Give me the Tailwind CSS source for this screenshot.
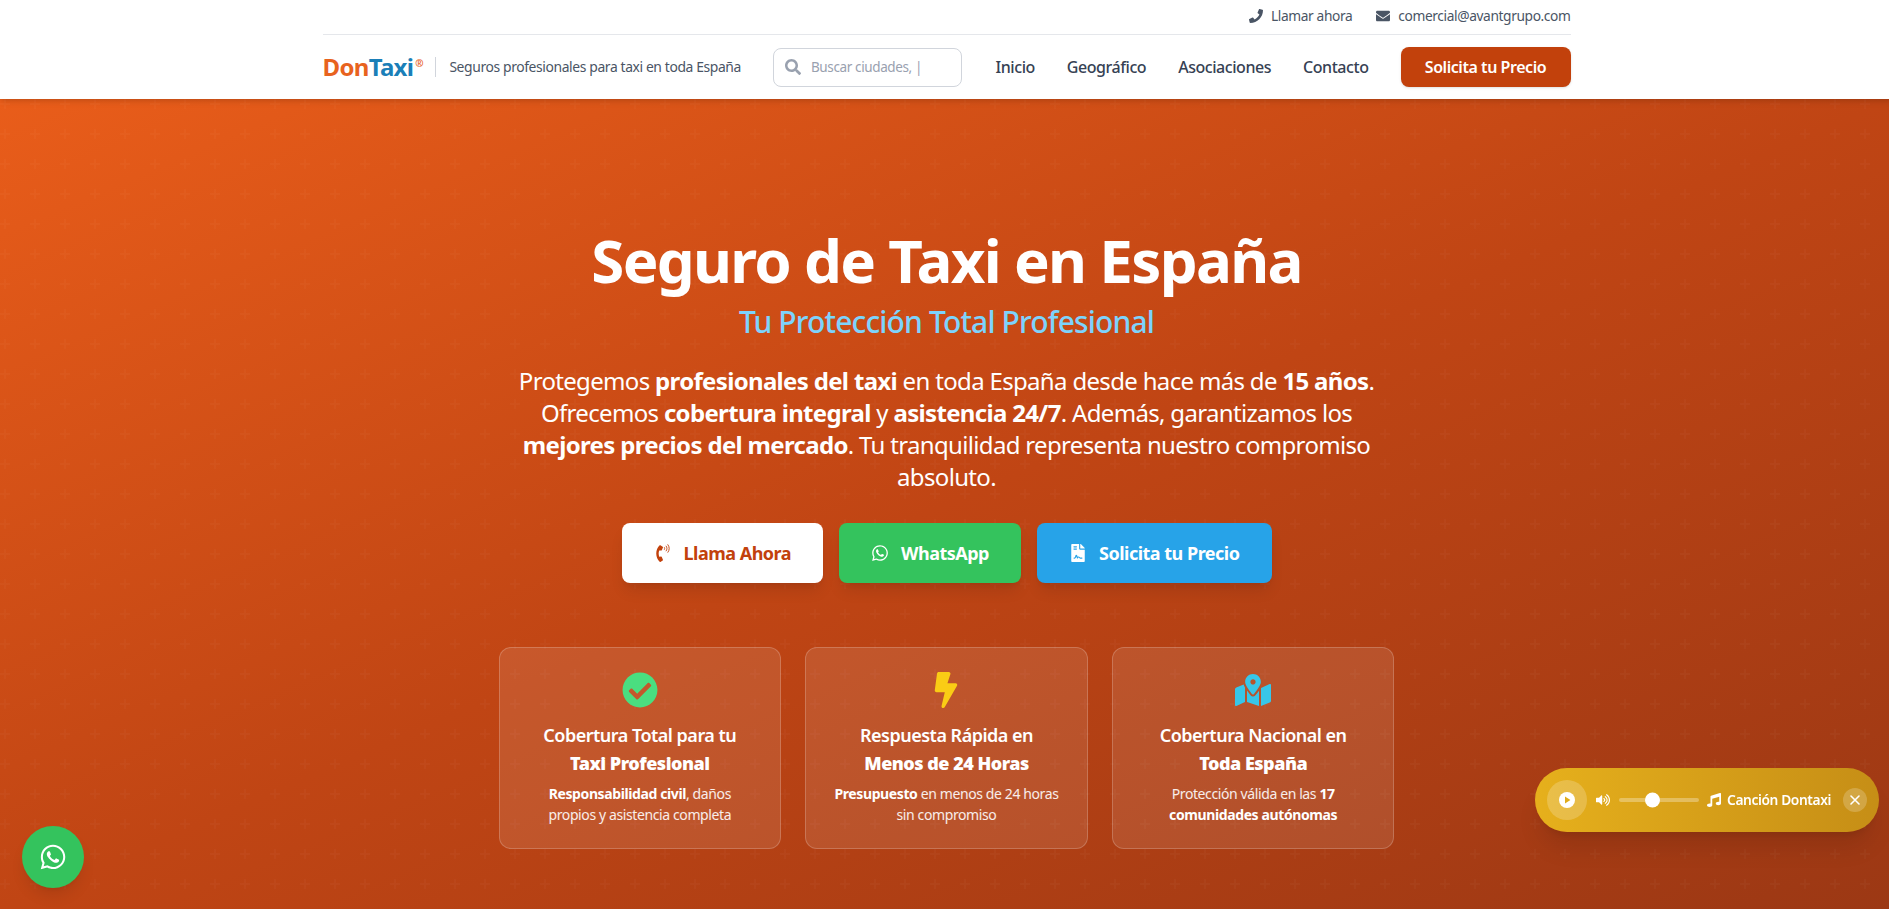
<!DOCTYPE html>
<html lang="es">
<head>
<meta charset="utf-8">
<title>DonTaxi</title>
<script src="https://cdn.jsdelivr.net/npm/@tailwindcss/browser@4"></script>
</head>
<body class="h-[909px] overflow-hidden bg-white font-['Noto_Sans',sans-serif] [&_*]:tracking-[-0.028em]">
<div class="relative w-[1893px] h-[909px] overflow-hidden">
  <header class="relative z-10 h-[99px] bg-white shadow-md">
    <div class="mx-auto max-w-7xl px-4">
      <div class="flex h-[35px] items-center justify-end gap-6 border-b border-gray-200 pb-0.5 text-[13.75px] text-gray-600">
        <span class="flex items-center gap-2">
          <svg class="h-3.5 w-3.5 fill-gray-600" viewBox="0 0 512 512"><path d="M493.4 24.6l-104-24c-11.3-2.6-22.9 3.3-27.5 13.9l-48 112c-4.2 9.8-1.4 21.3 6.9 28l60.6 49.6c-36 76.7-98.9 140.5-177.2 177.2l-49.6-60.6c-6.8-8.3-18.2-11.1-28-6.9l-112 48C3.9 366.5-2 378.1.6 389.4l24 104C27.1 504.2 36.7 512 48 512c256.1 0 464-207.5 464-464 0-11.2-7.7-20.9-18.6-23.4z"/></svg>
          Llamar ahora
        </span>
        <span class="flex items-center gap-2">
          <svg class="h-3.5 w-3.5 fill-gray-600" viewBox="0 0 512 512"><path d="M502.3 190.8c3.9-3.1 9.7-.2 9.7 4.7V400c0 26.5-21.5 48-48 48H48c-26.5 0-48-21.5-48-48V195.6c0-5 5.7-7.8 9.7-4.7 22.4 17.4 52.1 39.5 154.1 113.6 21.1 15.4 56.7 47.8 92.2 47.6 35.7.3 72-32.8 92.3-47.6 102-74.1 131.6-96.3 154-113.7zM256 320c23.2.4 56.6-29.2 73.4-41.4 132.7-96.3 142.8-104.7 173.4-128.7 5.8-4.5 9.2-11.5 9.2-18.9v-19c0-26.5-21.5-48-48-48H48C21.5 64 0 85.5 0 112v19c0 7.4 3.4 14.3 9.2 18.9 30.6 23.9 40.7 32.4 173.4 128.7 16.8 12.2 50.2 41.8 73.4 41.4z"/></svg>
          comercial@avantgrupo.com
        </span>
      </div>
      <div class="flex h-[64px] items-center">
        <div class="flex items-center">
          <span class="text-[24px] leading-none font-bold"><span class="text-[#e8631e]">Don</span><span class="text-[#1b7fb8]">Taxi</span></span>
          <span class="mb-2 ml-0.5 text-[10px] leading-none font-bold text-[#e8631e]">®</span>
          <span class="ml-3 h-5 w-px bg-gray-300"></span>
          <span class="ml-[13px] text-[13.9px] text-gray-600">Seguros profesionales para taxi en toda España</span>
        </div>
        <div class="ml-[32px] flex h-[39px] w-[189px] items-center gap-2.5 rounded-lg border border-gray-300 px-[11px]">
          <svg class="h-4 w-4 shrink-0 fill-gray-400" viewBox="0 0 512 512"><path d="M505 442.7L405.3 343c-4.5-4.5-10.6-7-17-7H372c27.6-35.3 44-79.7 44-128C416 93.1 322.9 0 208 0S0 93.1 0 208s93.1 208 208 208c48.3 0 92.7-16.4 128-44v16.3c0 6.4 2.5 12.5 7 17l99.7 99.7c9.4 9.4 24.6 9.4 33.9 0l28.3-28.3c9.4-9.4 9.4-24.6.1-34zM208 336c-70.7 0-128-57.2-128-128 0-70.7 57.2-128 128-128 70.7 0 128 57.2 128 128 0 70.7-57.2 128-128 128z"/></svg>
          <span class="text-[13.5px] whitespace-nowrap text-gray-400">Buscar ciudades, |</span>
        </div>
        <nav class="ml-auto flex items-center gap-8 text-[16px] font-medium text-gray-700">
          <span>Inicio</span><span>Geográfico</span><span>Asociaciones</span><span>Contacto</span>
          <span class="flex h-10 w-[170px] items-center justify-center rounded-lg bg-[#c2410c] text-[16px] font-semibold text-white shadow-sm">Solicita tu Precio</span>
        </nav>
      </div>
    </div>
  </header>

  <main class="relative h-[810px] bg-linear-to-br from-[#e95d1a] via-[#c04514] to-[#9c3814]">
    <svg class="absolute inset-0 h-full w-full" aria-hidden="true"><defs><pattern id="plus" width="60" height="60" patternUnits="userSpaceOnUse"><path fill="#fff" fill-opacity="0.025" d="M36 34v-4h-2v4h-4v2h4v4h2v-4h4v-2h-4zm0-30V0h-2v4h-4v2h4v4h2V6h4V4h-4zM6 34v-4H4v4H0v2h4v4h2v-4h4v-2H6zM6 4V0H4v4H0v2h4v4h2V6h4V4H6z"/></pattern></defs><rect width="100%" height="100%" fill="url(#plus)"/></svg>
    <div class="relative mx-auto flex max-w-4xl flex-col items-center pt-[131px] text-center text-white">
      <h1 class="text-[60px] leading-[60px] font-bold whitespace-nowrap">Seguro de Taxi en España</h1>
      <h2 class="mt-[14px] text-[30px] leading-9 font-medium text-[#7dd3fc]">Tu Protección Total Profesional</h2>
      <p class="mt-[25px] w-[870px] text-[24px] leading-8">Protegemos <strong class="font-bold">profesionales del taxi</strong> en toda España desde hace más de <strong class="font-bold">15 años</strong>. Ofrecemos <strong class="font-bold">cobertura integral</strong> y <strong class="font-bold">asistencia 24/7</strong>. Además, garantizamos los <strong class="font-bold">mejores precios del mercado</strong>. Tu tranquilidad representa nuestro compromiso absoluto.</p>
      <div class="mt-[30px] flex gap-4 text-[18px] font-bold">
        <span class="flex h-[60px] items-center gap-3 rounded-lg bg-white px-8 text-[#c2410c] shadow-lg">
          <svg class="h-[18px] w-[18px] fill-[#c2410c]" viewBox="0 0 384 512"><path d="M97.333 506.966c-129.874-129.874-129.681-340.252 0-469.933 5.698-5.698 14.527-6.632 21.263-2.422l64.817 40.513a17.187 17.187 0 0 1 6.849 20.958l-32.408 81.021a17.188 17.188 0 0 1-17.669 10.719l-55.81-5.58c-21.051 58.261-20.612 122.471 0 179.515l55.811-5.581a17.188 17.188 0 0 1 17.669 10.719l32.408 81.022a17.188 17.188 0 0 1-6.849 20.958l-64.817 40.513a17.19 17.19 0 0 1-21.264-2.422z"/><path fill="none" stroke="#c2410c" stroke-width="26" stroke-linecap="round" d="M232 100c12 18 12 38 0 56M282 60c32 42 32 94 0 136M332 20c50 66 50 150 0 216"/></svg>
          Llama Ahora
        </span>
        <span class="flex h-[60px] items-center gap-3 rounded-lg bg-[#34c35d] px-8 shadow-lg">
          <svg class="h-[18px] w-[18px] fill-white" viewBox="0 0 448 512"><path d="M380.9 97.1C339 55.1 283.2 32 223.9 32c-122.4 0-222 99.6-222 222 0 39.1 10.2 77.3 29.6 111L0 480l117.7-30.9c32.4 17.7 68.9 27 106.1 27h.1c122.3 0 224.1-99.6 224.1-222 0-59.3-25.2-115-67.1-157zm-157 341.6c-33.2 0-65.7-8.9-94-25.7l-6.7-4-69.8 18.3L72 359.2l-4.4-7c-18.5-29.4-28.2-63.3-28.2-98.2 0-101.7 82.8-184.5 184.6-184.5 49.3 0 95.6 19.2 130.4 54.1 34.8 34.9 56.2 81.2 56.1 130.5 0 101.8-84.9 184.6-186.6 184.6zm101.2-138.2c-5.5-2.8-32.8-16.2-37.9-18-5.1-1.9-8.8-2.8-12.5 2.8-3.7 5.6-14.3 18-17.6 21.8-3.2 3.7-6.5 4.2-12 1.4-32.6-16.3-54-29.1-75.5-66-5.7-9.8 5.7-9.1 16.3-30.3 1.8-3.7.9-6.9-.5-9.7-1.4-2.8-12.5-30.1-17.1-41.2-4.5-10.8-9.1-9.3-12.5-9.5-3.2-.2-6.9-.2-10.6-.2-3.7 0-9.7 1.4-14.8 6.9-5.1 5.6-19.4 19-19.4 46.3 0 27.3 19.9 53.7 22.6 57.4 2.8 3.7 39.1 59.7 94.8 83.8 35.2 15.2 49 16.5 66.6 13.9 10.7-1.6 32.8-13.4 37.4-26.4 4.6-13 4.6-24.1 3.2-26.4-1.3-2.5-5-3.9-10.5-6.6z"/></svg>
          WhatsApp
        </span>
        <span class="flex h-[60px] items-center gap-3 rounded-lg bg-[#27a3e8] px-8 shadow-lg">
          <svg class="h-[18px] w-[18px] fill-white" viewBox="0 0 384 512"><path d="M224 136V0H24C10.7 0 0 10.7 0 24v464c0 13.3 10.7 24 24 24h336c13.3 0 24-10.7 24-24V160H248c-13.2 0-24-10.8-24-24zM64 72c0-4.42 3.58-8 8-8h80c4.42 0 8 3.58 8 8v16c0 4.42-3.58 8-8 8H72c-4.42 0-8-3.58-8-8V72zm0 64c0-4.42 3.58-8 8-8h80c4.42 0 8 3.58 8 8v16c0 4.42-3.58 8-8 8H72c-4.42 0-8-3.58-8-8v-16zm192.81 248H304c8.84 0 16 7.16 16 16s-7.16 16-16 16h-47.19c-16.45 0-31.27-9.14-38.64-23.86-2.95-5.92-8.09-6.52-10.17-6.52s-7.22.59-10.02 6.19l-7.67 15.34a15.986 15.986 0 0 1-14.31 8.84c-.38 0-.75-.02-1.14-.05-6.45-.45-12-4.75-14.03-10.89L144 354.59l-10.61 31.88c-5.89 17.66-22.38 29.53-41 29.53H80c-8.84 0-16-7.16-16-16s7.16-16 16-16h12.39c4.83 0 9.11-3.08 10.64-7.66l18.19-54.64c3.3-9.81 12.44-16.41 22.78-16.41s19.48 6.59 22.77 16.41l13.88 41.64c19.77-16.19 54.05-9.7 66 14.16 2.02 4.06 5.96 6.5 10.16 6.5zM377 105L279.1 7c-4.5-4.5-10.6-7-17-7H256v128h128v-6.1c0-6.3-2.5-12.4-7-16.9z"/></svg>
          Solicita tu Precio
        </span>
      </div>
      <div class="mt-16 grid w-full grid-cols-3 gap-6">
        <div class="flex h-[202px] flex-col items-center rounded-xl border border-white/20 bg-white/10 px-6 pt-6">
          <svg class="h-9 w-9 shrink-0 fill-[#4ade80]" viewBox="0 0 512 512"><path d="M504 256c0 136.967-111.033 248-248 248S8 392.967 8 256 119.033 8 256 8s248 111.033 248 248zM227.314 387.314l184-184c6.248-6.248 6.248-16.379 0-22.627l-22.627-22.627c-6.248-6.249-16.379-6.249-22.628 0L216 308.118l-70.059-70.059c-6.248-6.248-16.379-6.248-22.628 0l-22.627 22.627c-6.248 6.248-6.248 16.379 0 22.627l104 104c6.249 6.25 16.379 6.25 22.628.001z"/></svg>
          <h3 class="mt-[13px] text-[18px] leading-7 font-semibold">Cobertura Total para tu <strong class="block font-black">Taxi Profesional</strong></h3>
          <p class="mt-1.5 text-[14px] leading-[21px] text-white/90"><strong class="font-bold text-white">Responsabilidad civil</strong>, daños<br>propios y asistencia completa</p>
        </div>
        <div class="flex h-[202px] flex-col items-center rounded-xl border border-white/20 bg-white/10 px-6 pt-6">
          <svg class="h-9 w-9 shrink-0 fill-[#facc15]" viewBox="0 0 320 512"><path d="M296 160H180.6l42.6-129.8C227.2 15 215.7 0 200 0H56C44 0 33.8 8.9 32.2 20.8l-32 240C-1.7 275.2 9.5 288 24 288h118.7L96.6 482.5c-3.6 15.2 8 29.5 23.3 29.5 8.4 0 16.4-4.4 20.8-12l176-304c9.3-15.9-2.2-36-20.7-36z"/></svg>
          <h3 class="mt-[13px] text-[18px] leading-7 font-semibold">Respuesta Rápida en <strong class="block font-black">Menos de 24 Horas</strong></h3>
          <p class="mt-1.5 text-[14px] leading-[21px] text-white/90"><strong class="font-bold text-white">Presupuesto</strong> en menos de 24 horas<br>sin compromiso</p>
        </div>
        <div class="flex h-[202px] flex-col items-center rounded-xl border border-white/20 bg-white/10 px-6 pt-6">
          <svg class="h-9 w-9 shrink-0 fill-[#38c6e8]" viewBox="0 0 576 512"><path d="M288 0c-69.59 0-126 56.41-126 126 0 56.26 82.35 158.8 113.9 196.02 6.39 7.54 17.82 7.54 24.2 0C331.65 284.8 414 182.26 414 126 414 56.41 357.59 0 288 0zm0 168c-23.2 0-42-18.8-42-42s18.8-42 42-42 42 18.8 42 42-18.8 42-42 42zM20.12 215.95A32.006 32.006 0 0 0 0 245.66v250.32c0 11.32 11.43 19.06 21.94 14.86L160 448V214.92c-8.84-15.98-16.07-31.54-21.25-46.42L20.12 215.95zM288 359.67c-14.07 0-27.38-6.18-36.51-16.96-19.66-23.2-40.57-49.62-59.49-76.72V448l192 64V266c-18.92 27.09-39.82 53.52-59.49 76.72-9.13 10.77-22.44 16.95-36.51 16.95zm266.06-198.51L416 224v288l139.88-55.95A31.996 31.996 0 0 0 576 426.34V176.02c0-11.32-11.43-19.06-21.94-14.86z"/></svg>
          <h3 class="mt-[13px] text-[18px] leading-7 font-semibold">Cobertura Nacional en <strong class="block font-black">Toda España</strong></h3>
          <p class="mt-1.5 text-[14px] leading-[21px] text-white/90">Protección válida en las <strong class="font-bold text-white">17<br>comunidades autónomas</strong></p>
        </div>
      </div>
    </div>
  </main>
</div>

<div class="fixed bottom-[21px] left-[22px] flex h-[62px] w-[62px] items-center justify-center rounded-full bg-[#34c35d] shadow-lg">
  <svg class="h-7 w-7 fill-white" viewBox="0 0 448 512"><path d="M380.9 97.1C339 55.1 283.2 32 223.9 32c-122.4 0-222 99.6-222 222 0 39.1 10.2 77.3 29.6 111L0 480l117.7-30.9c32.4 17.7 68.9 27 106.1 27h.1c122.3 0 224.1-99.6 224.1-222 0-59.3-25.2-115-67.1-157zm-157 341.6c-33.2 0-65.7-8.9-94-25.7l-6.7-4-69.8 18.3L72 359.2l-4.4-7c-18.5-29.4-28.2-63.3-28.2-98.2 0-101.7 82.8-184.5 184.6-184.5 49.3 0 95.6 19.2 130.4 54.1 34.8 34.9 56.2 81.2 56.1 130.5 0 101.8-84.9 184.6-186.6 184.6zm101.2-138.2c-5.5-2.8-32.8-16.2-37.9-18-5.1-1.9-8.8-2.8-12.5 2.8-3.7 5.6-14.3 18-17.6 21.8-3.2 3.7-6.5 4.2-12 1.4-32.6-16.3-54-29.1-75.5-66-5.7-9.8 5.7-9.1 16.3-30.3 1.8-3.7.9-6.9-.5-9.7-1.4-2.8-12.5-30.1-17.1-41.2-4.5-10.8-9.1-9.3-12.5-9.5-3.2-.2-6.9-.2-10.6-.2-3.7 0-9.7 1.4-14.8 6.9-5.1 5.6-19.4 19-19.4 46.3 0 27.3 19.9 53.7 22.6 57.4 2.8 3.7 39.1 59.7 94.8 83.8 35.2 15.2 49 16.5 66.6 13.9 10.7-1.6 32.8-13.4 37.4-26.4 4.6-13 4.6-24.1 3.2-26.4-1.3-2.5-5-3.9-10.5-6.6z"/></svg>
</div>

<div class="fixed right-[10px] bottom-[77px] flex h-[64px] w-[344px] items-center rounded-full bg-linear-to-r from-[#e6b01c] to-[#c68e16] pr-3 pl-3 text-white shadow-xl">
  <span class="flex h-10 w-10 items-center justify-center rounded-full bg-white/20">
    <svg class="h-4 w-4" viewBox="0 0 16 16"><circle cx="8" cy="8" r="8" fill="#fff"/><path d="M6 4.6 11.4 8 6 11.4z" fill="#e0ac1c"/></svg>
  </span>
  <svg class="ml-[9px] h-3.5 w-3.5 fill-white" viewBox="0 0 576 512"><path d="M215.03 71.05L126.06 160H24c-13.26 0-24 10.74-24 24v144c0 13.25 10.74 24 24 24h102.06l88.97 88.95c15.03 15.03 40.97 4.47 40.97-16.97V88.02c0-21.46-25.96-31.98-40.97-16.97zm233.32-51.08c-11.17-7.33-26.18-4.24-33.51 6.95-7.34 11.17-4.22 26.18 6.95 33.51 66.27 43.49 105.82 116.6 105.82 195.58 0 78.98-39.55 152.09-105.82 195.58-11.17 7.32-14.29 22.34-6.95 33.5 7.04 10.71 21.93 14.56 33.51 6.95C528.27 439.58 576 351.33 576 256S528.27 72.43 448.35 19.97zM480 256c0-63.53-32.06-121.94-85.77-156.24-11.19-7.14-26.03-3.82-33.12 7.46s-3.78 26.21 7.41 33.36C408.27 165.97 432 209.11 432 256s-23.73 90.03-63.48 115.42c-11.19 7.14-14.5 22.07-7.41 33.36 6.51 10.36 21.12 15.14 33.12 7.46C447.94 377.94 480 319.53 480 256zm-141.77-76.87c-11.58-6.33-26.19-2.16-32.61 9.45-6.39 11.61-2.16 26.2 9.45 32.61C327.98 228.28 336 241.63 336 256c0 14.38-8.02 27.72-20.92 34.81-11.61 6.41-15.84 21-9.45 32.61 6.43 11.66 21.05 15.8 32.61 9.45 28.23-15.55 45.77-45 45.77-76.88s-17.54-61.32-45.78-76.86z"/></svg>
  <span class="relative ml-[9px] h-1 w-20 rounded-full bg-white/30">
    <span class="absolute top-1/2 left-[26px] h-[15px] w-[15px] -translate-y-1/2 rounded-full bg-white"></span>
  </span>
  <svg class="ml-2 h-3.5 w-3.5 fill-white" viewBox="0 0 512 512"><path d="M470.38 1.51L150.41 96A32 32 0 0 0 128 126.51v261.41A139 139 0 0 0 96 384c-53 0-96 28.66-96 64s43 64 96 64 96-28.66 96-64V214.32l256-75v184.61a138.4 138.4 0 0 0-32-3.93c-53 0-96 28.66-96 64s43 64 96 64 96-28.65 96-64V32a32 32 0 0 0-41.62-30.49z"/></svg>
  <span class="ml-1.5 text-[13.75px] font-semibold whitespace-nowrap">Canción Dontaxi</span>
  <span class="ml-auto flex h-6 w-6 items-center justify-center rounded-full bg-white/20">
    <svg class="h-3 w-3 stroke-white" viewBox="0 0 12 12" fill="none" stroke-width="1.6" stroke-linecap="round"><path d="M2 2l8 8M10 2l-8 8"/></svg>
  </span>
</div>
</body>
</html>
